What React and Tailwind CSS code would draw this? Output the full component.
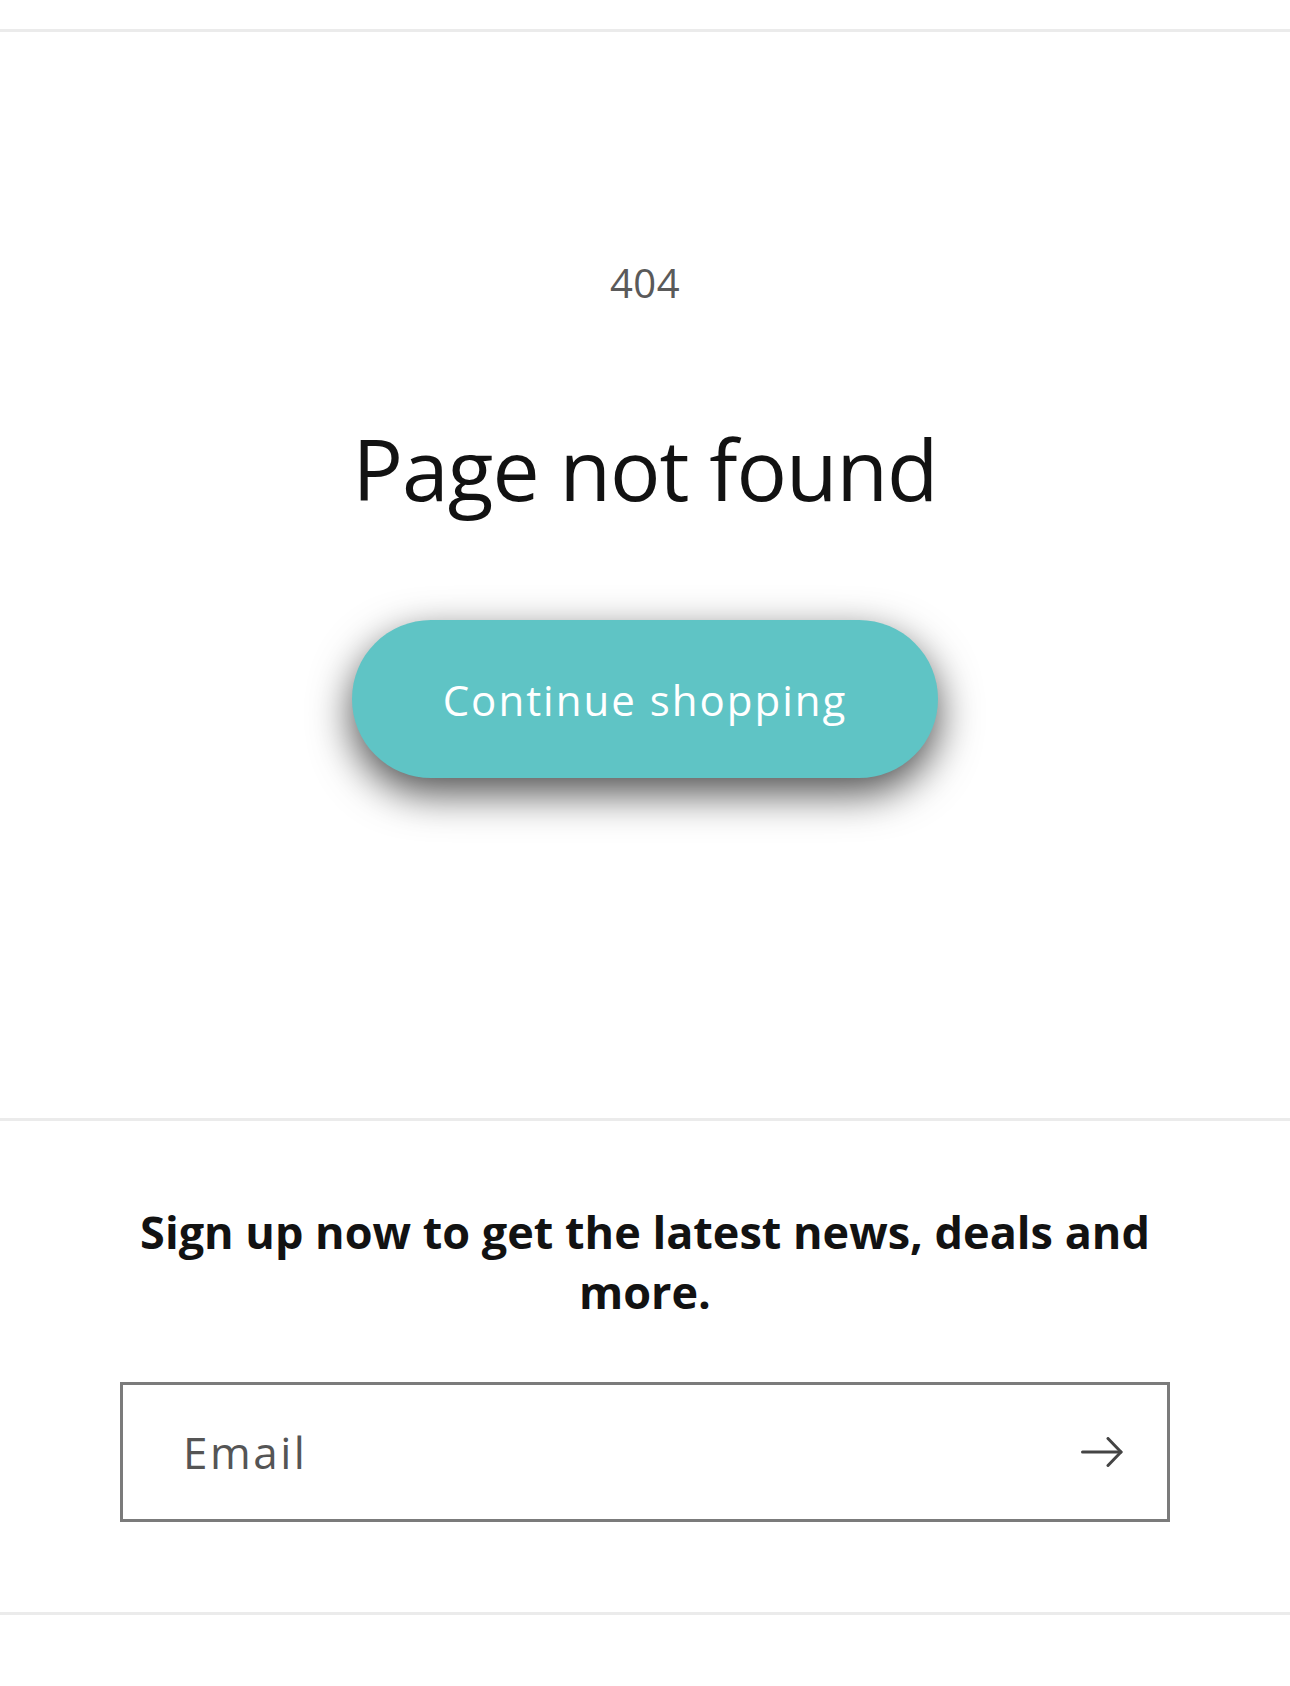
export default function App() {
  return (
    <div className="min-h-screen bg-white font-['Open_Sans',sans-serif] text-[#121212]">
      <div className="h-[29px]" />
      <div className="h-[3px] bg-[#ebebeb]" />

      <main className="flex flex-col items-center pt-[231px] pb-[340px]">
        <p className="text-[40px] leading-[40px] text-[#5a5a5a] tracking-[0.5px]">404</p>
        <h1 className="mt-[124px] text-[84px] leading-[84px] font-normal tracking-[-1px]">
          Page not found
        </h1>
        <a
          href="#"
          className="mt-[109px] flex h-[158px] w-[586px] items-center justify-center rounded-full bg-[#5fc4c5] text-[42px] tracking-[2px] text-white shadow-[0_15px_42px_rgba(0,0,0,0.7)]"
        >
          Continue shopping
        </a>
      </main>

      <div className="h-[3px] bg-[#ebebeb]" />

      <section className="px-[120px] pt-[81px] pb-[90px]">
        <h2 className="text-center text-[45px] leading-[60px] font-bold">
          <span className="whitespace-nowrap">Sign up now to get the latest news, deals and</span>
          <br />
          more.
        </h2>
        <div className="mt-[60px] flex h-[140px] items-center justify-between border-[3px] border-[#7b7b7b] pl-[60px] pr-[44px]">
          <span className="text-[44px] tracking-[2.5px] text-[#555]">Email</span>
          <svg width="42" height="30" viewBox="0 0 42 30" fill="none" stroke="#444" strokeWidth="3" strokeLinecap="round" strokeLinejoin="round">
            <path d="M1.5 15H40" />
            <path d="M27 1.5L40 15L27 28.5" />
          </svg>
        </div>
      </section>

      <div className="h-[3px] bg-[#ebebeb]" />
    </div>
  )
}
